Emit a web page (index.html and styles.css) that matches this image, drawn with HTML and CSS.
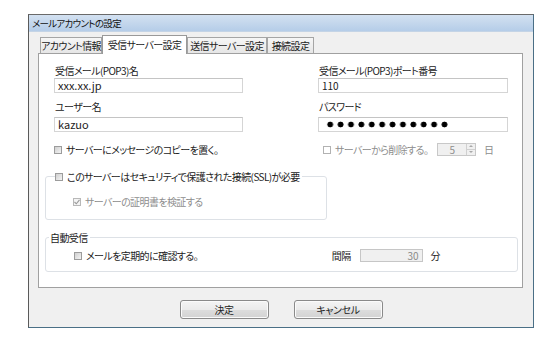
FILE: index.html
```html
<!DOCTYPE html>
<html lang="ja">
<head>
  <meta charset="UTF-8">
  <title>メールアカウントの設定</title>
  <link rel="stylesheet" href="styles.css">
</head>
<body>

  <!-- ダイアログ -->
  <div class="window">
    <div class="titlebar">メールアカウントの設定</div>

    <div class="tabs">
      <div class="tab tab-account">アカウント情報</div>
      <div class="tab tab-recv active">受信サーバー設定</div>
      <div class="tab tab-send">送信サーバー設定</div>
      <div class="tab tab-conn">接続設定</div>
    </div>

    <div class="panel">
      <div class="fields">
        <div class="field">
          <div class="label">受信メール(POP3)名</div>
          <div class="input">xxx.xx.jp</div>
        </div>
        <div class="field">
          <div class="label">受信メール(POP3)ポート番号</div>
          <div class="input small-text">110</div>
        </div>
        <div class="field second">
          <div class="label">ユーザー名</div>
          <div class="input">kazuo</div>
        </div>
        <div class="field second">
          <div class="label label-pass">パスワード</div>
          <div class="input"><span class="dots"></span></div>
        </div>

        <div class="check-row">
          <span class="cb"></span>
          <span>サーバーにメッセージのコピーを置く。</span>
        </div>
        <div class="check-row right disabled">
          <span class="cb cb-off"></span>
          <span class="del-text">サーバーから削除する。</span>
          <span class="spin">
            <span class="spin-val">5</span>
            <span class="spin-btns">
              <span class="spin-up"></span>
              <span class="spin-down"></span>
            </span>
          </span>
          <span class="unit">日</span>
        </div>
      </div>

      <fieldset class="group ssl">
        <legend>
          <span class="cb"></span>
          <span>このサーバーはセキュリティで保護された接続(SSL)が必要</span>
        </legend>
        <div class="check-row disabled">
          <span class="cb cb-checked">
            <svg width="6" height="6" viewBox="0 0 6 6"><path d="M0.5 3 L2.3 4.8 L5.5 0.8" fill="none" stroke="#9a9a9a" stroke-width="1.1"/></svg>
          </span>
          <span>サーバーの証明書を検証する</span>
        </div>
      </fieldset>

      <fieldset class="group auto">
        <legend>自動受信</legend>
        <div class="auto-row">
          <div class="check-row">
            <span class="cb"></span>
            <span>メールを定期的に確認する。</span>
          </div>
          <div class="interval">
            <span class="interval-label">間隔</span>
            <span class="input num">30</span>
            <span class="interval-unit">分</span>
          </div>
        </div>
      </fieldset>
    </div>

    <div class="buttons">
      <button class="btn">決定</button>
      <button class="btn">キャンセル</button>
    </div>
  </div>

</body>
</html>
```

FILE: styles.css
```css
body {
  margin: 0;
  background: #ffffff;
  font-family: "Noto Sans CJK JP", "Noto Sans", sans-serif;
  font-feature-settings: "palt" 1;
  color: #222;
}

.window {
  box-sizing: border-box;
  width: 506px;
  height: 314px;
  margin: 14px 0 0 28px;
  background: #f0f0f0;
  border: 1px solid #4a6f86;
  border-left-color: #5a5a5a;
  border-top-color: #6a6a6a;
}

.titlebar {
  height: 16px;
  line-height: 16px;
  padding-left: 3px;
  font-size: 9.5px;
  letter-spacing: -0.7px;
  color: #111;
  background: linear-gradient(#d3e1f1, #b5cde8);
  border-bottom: 1px solid #c4d4e6;
}

/* タブ */
.tabs {
  display: flex;
  align-items: flex-end;
  height: 18px;
  margin: 3px 0 0 11px;
  position: relative;
  z-index: 1;
}

.tab {
  box-sizing: border-box;
  height: 16px;
  line-height: 15px;
  font-size: 10px;
  letter-spacing: -0.6px;
  text-align: center;
  border: 1px solid #a5a5a5;
  border-bottom: none;
  background: linear-gradient(#f6f6f6, #e6e6e6);
  white-space: nowrap;
}

.tab.active {
  height: 19px;
  margin-bottom: -1px;
  line-height: 17px;
  background: #ffffff;
  border-color: #999;
}

.tab-account { width: 62px; }
.tab-recv { width: 85px; }
.tab-send { width: 80px; }
.tab-conn { width: 47px; }

/* パネル */
.panel {
  box-sizing: border-box;
  height: 235px;
  margin: 0 10px 0 9px;
  background: #ffffff;
  border: 1px solid #a0a0a0;
  font-size: 10px;
  letter-spacing: -0.6px;
  line-height: 13px;
}

.fields {
  display: grid;
  grid-template-columns: 189px 190px;
  column-gap: 75px;
  padding: 10px 0 0 15px;
}

.label {
  height: 13px;
  margin-bottom: 1px;
  padding-left: 1px;
  white-space: nowrap;
}

.field.second {
  margin-top: 7px;
}

.field.second .label {
  margin-bottom: 4px;
}

.input {
  box-sizing: border-box;
  height: 15px;
  line-height: 13px;
  padding-left: 3px;
  border: 1px solid #d5d5d5;
  border-top-color: #c4c4c4;
  background: #ffffff;
  font-size: 11px;
  letter-spacing: 0;
  white-space: nowrap;
}

.small-text {
  font-size: 10px;
}

.dots {
  display: inline-block;
  width: 126px;
  height: 13px;
  margin-left: 3px;
  background: radial-gradient(circle, #000 2.6px, transparent 3.2px) 0 0 / 10.4px 13px repeat-x;
  vertical-align: top;
}

/* チェックボックス */
.check-row {
  display: flex;
  align-items: center;
  gap: 4px;
  height: 13px;
  margin-top: 11px;
  white-space: nowrap;
}

.check-row.right {
  padding-left: 5px;
}

.disabled {
  color: #8d8d8d;
}

.cb {
  box-sizing: border-box;
  display: inline-flex;
  align-items: center;
  justify-content: center;
  width: 8px;
  height: 8px;
  border: 1px solid #9c9c9c;
  background: linear-gradient(135deg, #cfcfcf, #f4f4f4);
  flex: none;
}

.cb-off {
  background: #ffffff;
  border-color: #b2b2b2;
}

.cb-checked {
  background: #f4f4f4;
  border-color: #b8b8b8;
}

.del-text {
  width: 98px;
}

.spin {
  box-sizing: border-box;
  display: flex;
  width: 39px;
  height: 13px;
  border: 1px solid #c8c8c8;
  background: #f0f0f0;
}

.spin-val {
  flex: 1;
  text-align: center;
  line-height: 11px;
  font-size: 10px;
}

.spin-btns {
  display: flex;
  flex-direction: column;
  width: 8px;
  border-left: 1px solid #d0d0d0;
}

.spin-up,
.spin-down {
  flex: 1;
  position: relative;
}

.spin-up {
  border-bottom: 1px solid #d0d0d0;
}

.spin-up::after,
.spin-down::after {
  content: "";
  position: absolute;
  left: 2px;
  top: 1px;
  border-left: 2px solid transparent;
  border-right: 2px solid transparent;
}

.spin-up::after {
  border-bottom: 2px solid #a8a8a8;
}

.spin-down::after {
  border-top: 2px solid #a8a8a8;
}

.unit {
  margin-left: 4px;
}

/* グループ */
.group {
  margin: 0;
  border: 1px solid #dde1e6;
  border-radius: 3px;
  min-width: 0;
}

.group legend {
  display: flex;
  align-items: center;
  gap: 4px;
  height: 13px;
  padding: 0 2px 0 0;
  white-space: nowrap;
}

.ssl {
  box-sizing: border-box;
  width: 282px;
  margin: 14px 0 0 6px;
  padding: 0 0 11px 9px;
}

.ssl .check-row {
  margin: 12px 0 0 18px;
}

.auto {
  box-sizing: border-box;
  width: 473px;
  margin: 11px 0 0 6px;
  padding: 0 0 9px 3px;
}

.auto legend {
  padding: 0 2px 0 1px;
}

.auto-row {
  display: flex;
  align-items: center;
  justify-content: space-between;
  margin-top: 5px;
  padding: 0 77px 0 25px;
}

.auto-row .check-row {
  margin-top: 0;
}

.interval {
  display: flex;
  align-items: center;
}

.interval-label {
  margin-right: 9px;
}

.interval-unit {
  margin-left: 8px;
}

.num {
  width: 63px;
  height: 13px;
  line-height: 11px;
  padding: 0 3px 0 0;
  text-align: right;
  color: #8a8a8a;
  background: #f0f0f0;
  border-color: #c6c6c6;
  font-size: 10px;
}

/* ボタン */
.buttons {
  display: flex;
  justify-content: center;
  gap: 25px;
  margin-top: 12px;
}

.btn {
  box-sizing: border-box;
  width: 89px;
  height: 19px;
  padding: 0;
  font-family: inherit;
  font-feature-settings: "palt" 1;
  font-size: 10px;
  letter-spacing: -0.4px;
  color: #222;
  border: 1px solid #8a8a8a;
  border-radius: 3px;
  background: linear-gradient(#f4f4f4 0%, #ebebeb 50%, #dddddd 51%, #d3d3d3 100%);
  box-shadow: inset 0 0 0 1px #fbfbfb;
}
```
